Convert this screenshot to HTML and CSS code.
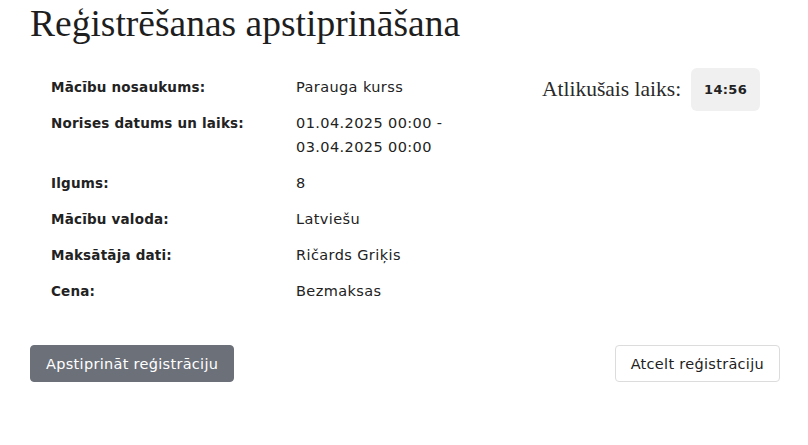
FILE: index.html
```html
<!DOCTYPE html>
<html lang="lv">
<head>
    <meta charset="UTF-8">
    <meta name="viewport" content="width=device-width, initial-scale=1.0">
    <title>Reģistrēšanas apstiprināšana</title>
    <link rel="stylesheet" href="styles.css">
</head>
<body>
    <div class="page">
        <h1>Reģistrēšanas apstiprināšana</h1>
        <div class="summary">
            <table class="details">
                <tr>
                    <th>Mācību nosaukums:</th>
                    <td>Parauga kurss</td>
                </tr>
                <tr>
                    <th>Norises datums un laiks:</th>
                    <td>01.04.2025 00:00 -<br>03.04.2025 00:00</td>
                </tr>
                <tr>
                    <th>Ilgums:</th>
                    <td>8</td>
                </tr>
                <tr>
                    <th>Mācību valoda:</th>
                    <td>Latviešu</td>
                </tr>
                <tr>
                    <th>Maksātāja dati:</th>
                    <td>Ričards Griķis</td>
                </tr>
                <tr>
                    <th>Cena:</th>
                    <td>Bezmaksas</td>
                </tr>
            </table>
            <div class="timer">
                <span class="timer-label">Atlikušais laiks:</span>
                <span class="timer-value">14:56</span>
            </div>
        </div>
        <div class="actions">
            <button class="btn btn-primary">Apstiprināt reģistrāciju</button>
            <button class="btn btn-outline">Atcelt reģistrāciju</button>
        </div>
    </div>
</body>
</html>
```

FILE: styles.css
```css
body {
    margin: 0;
    font-family: "DejaVu Sans", "Noto Sans", sans-serif;
    color: #222;
    background: #fff;
}
.page {
    width: 750px;
    padding: 0 28px 0 30px;
}
h1 {
    margin: 0;
    padding-top: 1px;
    font-family: "Liberation Serif", serif;
    font-weight: normal;
    font-size: 37.5px;
    line-height: 46px;
    color: #1e1e1e;
}
.summary {
    display: flex;
    justify-content: space-between;
    align-items: flex-start;
    margin-top: 28px;
    margin-right: 20px;
}
.details {
    border-collapse: collapse;
    margin-left: 11px;
    font-size: 14.5px;
    letter-spacing: 0.4px;
}
.details th {
    width: 245px;
    padding: 0 0 12px 10px;
    text-align: left;
    vertical-align: top;
    font-weight: bold;
    font-size: 13.5px;
    letter-spacing: 0.2px;
    line-height: 24px;
}
.details td {
    padding: 0 0 12px;
    vertical-align: top;
    line-height: 24px;
}
.timer {
    display: flex;
    align-items: center;
    gap: 10px;
    margin-top: -7px;
}
.timer-label {
    font-family: "Liberation Serif", serif;
    font-size: 21.5px;
    color: #2a2a2a;
}
.timer-value {
    padding: 14px 13px;
    background: #f0f0f0;
    border-radius: 6px;
    font-weight: bold;
    font-size: 13px;
    letter-spacing: 0.3px;
}
.actions {
    display: flex;
    justify-content: space-between;
    margin-top: 30px;
}
.btn {
    font-family: "DejaVu Sans", "Noto Sans", sans-serif;
    font-size: 14.5px;
    letter-spacing: 0.3px;
    padding: 0 15px;
    height: 37px;
    border-radius: 4px;
    cursor: pointer;
}
.btn-primary {
    background: #6c7079;
    color: #fff;
    border: 1px solid #6c7079;
}
.btn-outline {
    background: #fff;
    color: #222;
    border: 1px solid #dcdcdc;
}
```
